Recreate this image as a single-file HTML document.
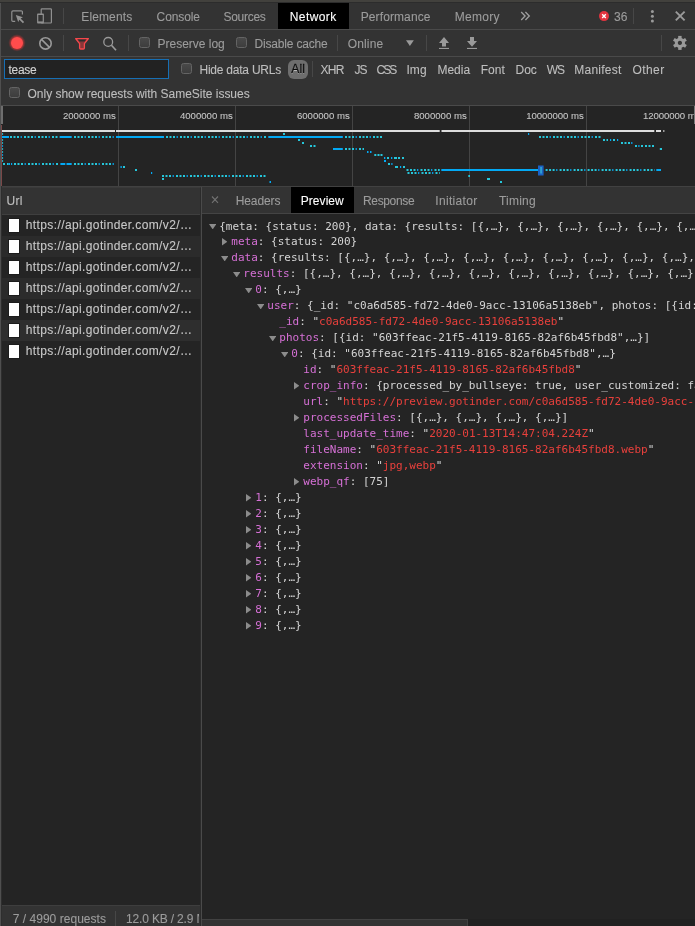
<!DOCTYPE html>
<html><head><meta charset="utf-8">
<title>DevTools</title>
<style>
html,body{margin:0;padding:0;}
body{width:695px;height:926px;overflow:hidden;background:#242424;position:relative;font-family:"Liberation Sans",sans-serif;font-size:12px;color:#a5a5a5;}
.a{position:absolute;}
.t{position:absolute;white-space:pre;line-height:14px;height:14px;-webkit-text-stroke:0.1px;}
.vd{position:absolute;width:1px;background:#474747;}
.cb{position:absolute;width:9px;height:9px;border:1px solid #646464;border-radius:2.5px;background:linear-gradient(#494949,#3d3d3d);}
.row{position:absolute;left:2px;width:198px;height:21px;}
.fi{position:absolute;left:9px;width:10px;height:13px;background:#fff;box-shadow:0 0 0 1px #1c1c1c;}
.tr{position:absolute;white-space:pre;font-family:"DejaVu Sans Mono","Liberation Mono",monospace;font-size:11px;line-height:13px;height:13px;color:#d5d5d5;}
.k{color:#d670d6;}
.s{color:#e8403c;}
.ar{position:absolute;width:0;height:0;}
.ad{border-left:3.7px solid transparent;border-right:3.7px solid transparent;border-top:5.4px solid #8c8c8c;}
.arr{border-top:3.7px solid transparent;border-bottom:3.7px solid transparent;border-left:5.2px solid #8c8c8c;}
</style></head><body><div id="root" style="position:absolute;left:0;top:0;width:695px;height:926px;will-change:transform">
<!-- backgrounds -->
<div class="a" style="left:0;top:0;width:695px;height:2px;background:#42413d"></div>
<div class="a" style="left:0;top:2px;width:695px;height:1px;background:#2c2c2c"></div>
<div class="a" style="left:0;top:3px;width:695px;height:26px;background:#333"></div>
<div class="a" style="left:0;top:29px;width:695px;height:1px;background:#4a4a4a"></div>
<div class="a" style="left:0;top:30px;width:695px;height:26px;background:#333"></div>
<div class="a" style="left:0;top:56px;width:695px;height:1px;background:#4a4a4a"></div>
<div class="a" style="left:0;top:57px;width:695px;height:48px;background:#333"></div>
<div class="a" style="left:0;top:105px;width:695px;height:1px;background:#4a4a4a"></div>
<!-- overview bottom / headers -->
<div class="a" style="left:0;top:186px;width:695px;height:1px;background:#414141"></div>
<div class="a" style="left:0;top:187px;width:695px;height:27px;background:#333"></div>
<div class="a" style="left:0;top:187px;width:200px;height:1px;background:#3a3a3a"></div>
<div class="a" style="left:0;top:214px;width:200px;height:1px;background:#3f3f3f"></div>
<div class="a" style="left:202px;top:213px;width:493px;height:1px;background:#444"></div>
<div class="a" style="left:202px;top:214px;width:493px;height:1px;background:#242424"></div>
<!-- panel divider -->
<div class="a" style="left:200px;top:188px;width:1px;height:738px;background:#2b2b2b"></div><div class="a" style="left:201px;top:187px;width:1px;height:739px;background:#4a4a4a"></div>
<!-- left strip -->
<div class="a" style="left:0;top:3px;width:1px;height:923px;background:#4f4f4f"></div>
<div class="a" style="left:1px;top:186px;width:1px;height:740px;background:#2e2e2e"></div>

<!-- selected tabs -->
<div class="a" style="left:278px;top:3px;width:71px;height:26px;background:#000"></div>
<div class="a" style="left:291px;top:187px;width:63px;height:26px;background:#000"></div>

<!-- row stripes -->
<div class="row" style="top:236px;background:#2b2b2b"></div>
<div class="row" style="top:278px;background:#2b2b2b"></div>
<div class="row" style="top:320px;background:#2e2e2e"></div>
<div class="fi" style="top:219px"></div>
<div class="fi" style="top:240px"></div>
<div class="fi" style="top:261px"></div>
<div class="fi" style="top:282px"></div>
<div class="fi" style="top:303px"></div>
<div class="fi" style="top:324px"></div>
<div class="fi" style="top:345px"></div>

<!-- status bar -->
<div class="a" style="left:2px;top:905px;width:198px;height:1px;background:#3e3e3e"></div>
<div class="a" style="left:2px;top:906px;width:198px;height:20px;background:#333"></div>
<div class="vd" style="left:115px;top:911px;height:15px"></div>
<!-- h scrollbar -->
<div class="a" style="left:202px;top:919px;width:493px;height:7px;background:#212121"></div>
<div class="a" style="left:202px;top:919px;width:265px;height:7px;background:#333;border-top:1px solid #414141;border-right:1px solid #414141;box-sizing:content-box"></div>

<!-- dividers -->
<div class="vd" style="left:63px;top:8px;height:16px"></div>
<div class="vd" style="left:633px;top:8px;height:16px"></div>
<div class="vd" style="left:63px;top:35px;height:16px"></div>
<div class="vd" style="left:128px;top:35px;height:16px"></div>
<div class="vd" style="left:337px;top:35px;height:16px"></div>
<div class="vd" style="left:426px;top:35px;height:16px"></div>
<div class="vd" style="left:661px;top:35px;height:16px"></div>
<div class="vd" style="left:312px;top:61px;height:16px"></div>

<!-- checkboxes -->
<div class="cb" style="left:139px;top:37px"></div>
<div class="cb" style="left:236px;top:37px"></div>
<div class="cb" style="left:181px;top:63px"></div>
<div class="cb" style="left:9px;top:87px"></div>

<!-- filter input -->
<div class="a" style="left:4px;top:59px;width:163px;height:18px;border:1px solid #176fb4;background:#222"></div>
<!-- All pill -->
<div class="a" style="left:288px;top:60px;width:20px;height:19px;border-radius:6px;background:#6e6e6e"></div>

<svg class="a" style="left:0;top:0" width="695" height="106" viewBox="0 0 695 106" fill="none">
<!-- inspect -->
<path d="M15.2 21.4 H13 a1.2 1.2 0 0 1 -1.2 -1.2 V12 a1.2 1.2 0 0 1 1.2 -1.2 h8.2 a1.2 1.2 0 0 1 1.2 1.2 V14.4" stroke="#909090" stroke-width="1.2"/>
<path d="M15.8 14.9 L22.9 17.3 L20.6 18.6 L24.1 22.1 L22.9 23.3 L19.4 19.8 L18.2 22.1 Z" fill="#939393"/>
<!-- device -->
<rect x="41.2" y="8.8" width="10.2" height="14.2" rx="0.8" stroke="#909090" stroke-width="1.2"/>
<rect x="37.1" y="13.4" width="6.8" height="10.1" rx="0.8" fill="#909090"/>
<rect x="38.3" y="15" width="4.4" height="6.4" fill="#333"/>
<!-- chevrons -->
<path d="M521.2 12 L525.1 16 L521.2 20 M525.4 12 L529.3 16 L525.4 20" stroke="#a0a0a0" stroke-width="1.3"/>
<!-- error -->
<circle cx="604" cy="16.1" r="5" fill="#e2343f"/>
<path d="M602.2 14.3 L605.8 17.9 M605.8 14.3 L602.2 17.9" stroke="#fff" stroke-width="1.4"/>
<!-- kebab -->
<circle cx="652.4" cy="11.4" r="1.5" fill="#9a9a9a"/><circle cx="652.4" cy="16.2" r="1.5" fill="#9a9a9a"/><circle cx="652.4" cy="21.1" r="1.5" fill="#9a9a9a"/>
<!-- close -->
<path d="M675.8 11.6 L684.6 20.4 M684.6 11.6 L675.8 20.4" stroke="#9a9a9a" stroke-width="1.9"/>
<!-- record -->
<circle cx="17" cy="42.9" r="8.4" fill="#ff3b3b" opacity="0.12"/>
<circle cx="17" cy="42.9" r="7.6" fill="#ff3b3b" opacity="0.2"/>
<circle cx="17" cy="42.9" r="6.8" fill="#ff3b3b" opacity="0.3"/>
<circle cx="17" cy="42.9" r="6" fill="#ff4c4c"/>
<!-- clear -->
<circle cx="45.5" cy="43.4" r="5.7" stroke="#9a9a9a" stroke-width="1.6"/>
<path d="M41.5 39.4 L49.5 47.4" stroke="#9a9a9a" stroke-width="1.6"/>
<!-- filter -->
<path d="M75.6 38.7 H88.4 L84.4 43.6 V48 a1 1 0 0 1 -1 1 h-2.8 a1 1 0 0 1 -1 -1 V43.6 Z" fill="#8a3638" stroke="#f5484c" stroke-width="1.3" stroke-linejoin="round"/>
<path d="M77.8 39.6 H86.2 L84.6 41.6 H79.4 Z" fill="#2c2c2c"/>
<!-- search -->
<circle cx="108.2" cy="41.9" r="4.4" stroke="#9a9a9a" stroke-width="1.3"/>
<path d="M111.5 45.2 L116 50.2" stroke="#9a9a9a" stroke-width="1.7"/>
<!-- dropdown -->
<polygon points="406,40.2 413.8,40.2 409.9,46" fill="#9a9a9a"/>
<!-- upload -->
<polygon points="444,37 449,43.1 446,43.1 446,46.6 442,46.6 442,43.1 439,43.1" fill="#9a9a9a"/>
<rect x="439" y="47.9" width="10" height="1.1" fill="#9a9a9a"/>
<!-- download -->
<polygon points="470,37 474,37 474,41 477,41 472,46.7 467,41 470,41" fill="#9a9a9a"/>
<rect x="467" y="47.9" width="10" height="1.1" fill="#9a9a9a"/>
<!-- gear -->
<g transform="translate(679.9 42.9)" fill="#9a9a9a">
<path fill-rule="evenodd" d="M0 -5.1 A5.1 5.1 0 1 0 0.001 -5.1 Z M0 -2.1 A2.1 2.1 0 1 1 -0.001 -2.1 Z"/>
<rect x="-1.7" y="-7" width="3.4" height="3"/>
<rect x="-1.7" y="-7" width="3.4" height="3" transform="rotate(60)"/>
<rect x="-1.7" y="-7" width="3.4" height="3" transform="rotate(120)"/>
<rect x="-1.7" y="-7" width="3.4" height="3" transform="rotate(180)"/>
<rect x="-1.7" y="-7" width="3.4" height="3" transform="rotate(240)"/>
<rect x="-1.7" y="-7" width="3.4" height="3" transform="rotate(300)"/>
</g>
</svg>
<svg class="a" style="left:208px;top:192px" width="14" height="14" viewBox="0 0 14 14" fill="none">
<path d="M4 4.5 L10 10.8 M10 4.5 L4 10.8" stroke="#727272" stroke-width="1.1"/>
</svg>

<svg class="a" style="left:0;top:106px" width="695" height="80" viewBox="0 0 695 80">
<rect x="118" y="0" width="1" height="80" fill="#444"/>
<rect x="235" y="0" width="1" height="80" fill="#444"/>
<rect x="352" y="0" width="1" height="80" fill="#444"/>
<rect x="469" y="0" width="1" height="80" fill="#444"/>
<rect x="586" y="0" width="1" height="80" fill="#444"/>
<rect x="1" y="0" width="2" height="18" fill="#6e6e6e"/>
<rect x="694" y="0" width="1" height="18" fill="#7a7a7a"/>
<rect x="1" y="19" width="1" height="61" fill="#7a4848"/>
<rect x="2" y="24" width="113" height="2" fill="#dddddd"/>
<rect x="116" y="24" width="323.7" height="2" fill="#dddddd"/>
<rect x="441.5" y="24" width="212.8" height="2" fill="#dddddd"/>
<rect x="656" y="24" width="5" height="2" fill="#dddddd"/>
<rect x="663" y="24" width="1.5" height="2" fill="#9a9a9a"/>
<rect x="2" y="27" width="1.1" height="2" fill="#26c6da" opacity="0.8"/>
<rect x="2" y="30" width="1.1" height="2" fill="#03a9f4" opacity="0.8"/>
<rect x="2" y="33" width="1.1" height="2" fill="#26c6da" opacity="0.8"/>
<rect x="2" y="36" width="1.1" height="2" fill="#26c6da" opacity="0.8"/>
<rect x="2" y="39" width="1.1" height="2" fill="#03a9f4" opacity="0.8"/>
<rect x="2" y="42" width="1.1" height="2" fill="#26c6da" opacity="0.8"/>
<rect x="2" y="45" width="1.1" height="2" fill="#26c6da" opacity="0.8"/>
<rect x="2" y="48" width="1.1" height="2" fill="#03a9f4" opacity="0.8"/>
<rect x="2" y="51" width="1.1" height="2" fill="#26c6da" opacity="0.8"/>
<rect x="2" y="54" width="1.1" height="2" fill="#26c6da" opacity="0.8"/>
<rect x="2" y="30" width="7" height="2" fill="#03a9f4"/>
<path d="M10 31H58" stroke="#26c6da" stroke-width="2" stroke-dasharray="2 1.5 2 1.5 2 5"/>
<path d="M20.6 31H58" stroke="#03a9f4" stroke-width="2" stroke-dasharray="1.2 12.8"/>
<rect x="59.6" y="30" width="12.1" height="2" fill="#03a9f4"/>
<path d="M74 31H114.5" stroke="#26c6da" stroke-width="2" stroke-dasharray="2 1.5 2 1.5 2 5"/>
<path d="M84.6 31H114.5" stroke="#03a9f4" stroke-width="2" stroke-dasharray="1.2 12.8"/>
<rect x="116" y="30" width="48" height="2" fill="#03a9f4"/>
<path d="M166 31H267" stroke="#26c6da" stroke-width="2" stroke-dasharray="2 1.5 2 1.5 2 5"/>
<path d="M176.6 31H267" stroke="#03a9f4" stroke-width="2" stroke-dasharray="1.2 12.8"/>
<rect x="268.3" y="30" width="74.5" height="2" fill="#03a9f4"/>
<path d="M345 31H382" stroke="#26c6da" stroke-width="2" stroke-dasharray="2 1.5 2 1.5 2 5"/>
<path d="M355.6 31H382" stroke="#03a9f4" stroke-width="2" stroke-dasharray="1.2 12.8"/>
<path d="M539 31H601" stroke="#26c6da" stroke-width="2" stroke-dasharray="2 1.5 2 1.5 2 5"/>
<path d="M549.6 31H601" stroke="#03a9f4" stroke-width="2" stroke-dasharray="1.2 12.8"/>
<rect x="283" y="27" width="2" height="2" fill="#26c6da"/>
<rect x="528" y="27" width="1.2" height="2" fill="#03a9f4"/>
<rect x="298" y="33" width="2" height="2" fill="#26c6da"/>
<rect x="603" y="33" width="2" height="2" fill="#26c6da"/>
<rect x="606.5" y="33" width="1.5" height="2" fill="#26c6da"/>
<rect x="613" y="33" width="2" height="2" fill="#26c6da"/>
<rect x="610" y="33" width="1.2" height="2" fill="#03a9f4"/>
<rect x="617" y="33" width="1.2" height="2" fill="#03a9f4"/>
<rect x="302" y="36" width="2" height="2" fill="#26c6da"/>
<rect x="621" y="36" width="2" height="2" fill="#26c6da"/>
<rect x="624.5" y="36" width="2.0" height="2" fill="#26c6da"/>
<rect x="628" y="36" width="2" height="2" fill="#26c6da"/>
<rect x="631.2" y="36" width="1.2" height="2" fill="#03a9f4"/>
<rect x="310" y="39" width="2" height="2" fill="#26c6da"/>
<rect x="313.5" y="39" width="2.0" height="2" fill="#26c6da"/>
<rect x="635" y="39" width="2" height="2" fill="#26c6da"/>
<rect x="641" y="39" width="2" height="2" fill="#26c6da"/>
<rect x="645" y="39" width="2" height="2" fill="#26c6da"/>
<rect x="648.5" y="39" width="2.0" height="2" fill="#26c6da"/>
<rect x="652" y="39" width="2" height="2" fill="#26c6da"/>
<rect x="638.3" y="39" width="1.2" height="2" fill="#03a9f4"/>
<rect x="333" y="42" width="9.8" height="2" fill="#03a9f4"/>
<path d="M345 43H364" stroke="#26c6da" stroke-width="2" stroke-dasharray="2 1.5 2 1.5 2 5"/>
<path d="M355.6 43H364" stroke="#03a9f4" stroke-width="2" stroke-dasharray="1.2 12.8"/>
<rect x="659.8" y="42" width="2.2" height="2" fill="#26c6da"/>
<rect x="367" y="45" width="1.5" height="2" fill="#03a9f4"/>
<rect x="370" y="45" width="1.5" height="2" fill="#03a9f4"/>
<rect x="374.3" y="48" width="2.0" height="2" fill="#26c6da"/>
<rect x="377.5" y="48" width="2.0" height="2" fill="#26c6da"/>
<rect x="380.5" y="48" width="2.0" height="2" fill="#26c6da"/>
<rect x="387" y="51" width="2" height="2" fill="#26c6da"/>
<rect x="394" y="51" width="3" height="2" fill="#26c6da"/>
<rect x="398" y="51" width="2" height="2" fill="#26c6da"/>
<rect x="402" y="51" width="2" height="2" fill="#26c6da"/>
<rect x="384" y="51" width="1.3" height="2" fill="#03a9f4"/>
<rect x="391" y="51" width="1.3" height="2" fill="#03a9f4"/>
<rect x="384" y="54" width="2" height="2" fill="#03a9f4"/>
<rect x="3" y="57" width="2" height="2" fill="#26c6da"/>
<rect x="7" y="57" width="1.5" height="2" fill="#26c6da"/>
<rect x="8.5" y="57" width="1.5" height="2" fill="#03a9f4"/>
<rect x="11" y="57" width="1.2" height="2" fill="#03a9f4"/>
<path d="M14 58H58" stroke="#26c6da" stroke-width="2" stroke-dasharray="2 1.5 2 1.5 2 5"/>
<path d="M24.6 58H58" stroke="#03a9f4" stroke-width="2" stroke-dasharray="1.2 12.8"/>
<rect x="60.4" y="57" width="4.9" height="2" fill="#03a9f4"/>
<rect x="66.5" y="57" width="5.2" height="2" fill="#03a9f4"/>
<path d="M74 58H114" stroke="#26c6da" stroke-width="2" stroke-dasharray="2 1.5 2 1.5 2 5"/>
<path d="M84.6 58H114" stroke="#03a9f4" stroke-width="2" stroke-dasharray="1.2 12.8"/>
<rect x="388" y="57" width="2" height="2" fill="#26c6da"/>
<rect x="391.3" y="57" width="1.2" height="2" fill="#03a9f4"/>
<rect x="120.5" y="60" width="1.3" height="2" fill="#03a9f4"/>
<rect x="123" y="60" width="2" height="2" fill="#26c6da"/>
<rect x="395" y="60" width="3" height="2" fill="#26c6da"/>
<rect x="403" y="60" width="2" height="2" fill="#26c6da"/>
<rect x="400" y="60" width="1.2" height="2" fill="#03a9f4"/>
<rect x="135" y="63" width="2" height="2" fill="#26c6da"/>
<path d="M406.5 64H439.7" stroke="#26c6da" stroke-width="2" stroke-dasharray="2 1.5 2 1.5 2 5"/>
<path d="M417.1 64H439.7" stroke="#03a9f4" stroke-width="2" stroke-dasharray="1.2 12.8"/>
<rect x="441.3" y="63" width="97.3" height="2" fill="#03a9f4"/>
<path d="M545.6 64H654.7" stroke="#26c6da" stroke-width="2" stroke-dasharray="2 1.5 2 1.5 2 5"/>
<path d="M556.2 64H654.7" stroke="#03a9f4" stroke-width="2" stroke-dasharray="1.2 12.8"/>
<rect x="656.3" y="63" width="4.7" height="2" fill="#03a9f4"/>
<rect x="151" y="66" width="1.2" height="2" fill="#03a9f4"/>
<path d="M407.5 67H439.7" stroke="#26c6da" stroke-width="2" stroke-dasharray="2 1.5 2 1.5 2 5"/>
<path d="M418.1 67H439.7" stroke="#03a9f4" stroke-width="2" stroke-dasharray="1.2 12.8"/>
<path d="M162 70H267" stroke="#26c6da" stroke-width="2" stroke-dasharray="2 1.5 2 1.5 2 5"/>
<path d="M172.6 70H267" stroke="#03a9f4" stroke-width="2" stroke-dasharray="1.2 12.8"/>
<rect x="468.3" y="69" width="1.7" height="2" fill="#26c6da"/>
<rect x="162" y="72" width="2" height="2" fill="#26c6da"/>
<rect x="487" y="72" width="3" height="2" fill="#26c6da"/>
<rect x="269.5" y="75" width="1.5" height="2" fill="#03a9f4"/>
<rect x="500" y="75" width="2" height="2" fill="#26c6da"/>
<rect x="538" y="59.5" width="5.6" height="10.0" fill="#1a62c6"/>
<rect x="540.5" y="61" width="1.1" height="6.5" fill="#3fc7d6"/>
</svg>
<div class="t" style="left:81.3px;top:10.05px;color:#9c9c9c;letter-spacing:0.117px;">Elements</div>
<div class="t" style="left:156.6px;top:10.05px;color:#9c9c9c;letter-spacing:-0.116px;">Console</div>
<div class="t" style="left:223.5px;top:10.05px;color:#9c9c9c;letter-spacing:-0.279px;">Sources</div>
<div class="t" style="left:289.75px;top:10.05px;color:#ffffff;letter-spacing:0.406px;">Network</div>
<div class="t" style="left:360.75px;top:10.05px;color:#9c9c9c;letter-spacing:0.098px;">Performance</div>
<div class="t" style="left:454.75px;top:10.05px;color:#9c9c9c;letter-spacing:0.281px;">Memory</div>
<div class="t" style="left:613.9px;top:9.5px;color:#9c9c9c;letter-spacing:0.094px;">36</div>
<div class="t" style="left:157.5px;top:36.8px;color:#9c9c9c;letter-spacing:-0.01px;">Preserve log</div>
<div class="t" style="left:254.5px;top:36.8px;color:#9c9c9c;letter-spacing:-0.177px;">Disable cache</div>
<div class="t" style="left:347.7px;top:36.8px;color:#9c9c9c;letter-spacing:0.169px;">Online</div>
<div class="t" style="left:8.4px;top:63.2px;color:#d4d4d4;letter-spacing:-0.246px;">tease</div>
<div class="t" style="left:199.5px;top:62.8px;color:#bebebe;letter-spacing:-0.231px;">Hide data URLs</div>
<div class="t" style="left:291.2px;top:62.0px;color:#0c0c0c;letter-spacing:0.25px;text-shadow:0 1px 0 rgba(255,255,255,0.5);-webkit-text-stroke:0.3px;">All</div>
<div class="t" style="left:320.5px;top:62.8px;color:#bebebe;letter-spacing:-0.698px;">XHR</div>
<div class="t" style="left:354.5px;top:62.8px;color:#bebebe;letter-spacing:-0.906px;">JS</div>
<div class="t" style="left:376.5px;top:62.8px;color:#bebebe;letter-spacing:-1.97px;">CSS</div>
<div class="t" style="left:406.4px;top:62.8px;color:#bebebe;letter-spacing:0.109px;">Img</div>
<div class="t" style="left:437.5px;top:62.8px;color:#bebebe;letter-spacing:-0.026px;">Media</div>
<div class="t" style="left:480.7px;top:62.8px;color:#bebebe;letter-spacing:0.044px;">Font</div>
<div class="t" style="left:515.6px;top:62.8px;color:#bebebe;letter-spacing:-0.089px;">Doc</div>
<div class="t" style="left:546.7px;top:62.8px;color:#bebebe;letter-spacing:-0.977px;">WS</div>
<div class="t" style="left:574.2px;top:62.8px;color:#bebebe;letter-spacing:0.266px;">Manifest</div>
<div class="t" style="left:632.5px;top:62.8px;color:#bebebe;letter-spacing:0.409px;">Other</div>
<div class="t" style="left:27.5px;top:86.8px;color:#bebebe;letter-spacing:-0.015px;">Only show requests with SameSite issues</div>
<div class="t" style="left:6.6px;top:193.8px;color:#c0c0c0;letter-spacing:0.188px;">Url</div>
<div class="t" style="left:235.75px;top:193.8px;color:#9c9c9c;letter-spacing:-0.114px;">Headers</div>
<div class="t" style="left:300.75px;top:193.8px;color:#ffffff;letter-spacing:0.051px;">Preview</div>
<div class="t" style="left:363.0px;top:193.8px;color:#9c9c9c;letter-spacing:-0.354px;">Response</div>
<div class="t" style="left:435.3px;top:193.8px;color:#9c9c9c;letter-spacing:0.316px;">Initiator</div>
<div class="t" style="left:499px;top:193.8px;color:#9c9c9c;letter-spacing:0.221px;">Timing</div>
<div class="t" style="left:25.8px;top:218.05px;color:#c8c8c8;letter-spacing:0.384px;">https://api.gotinder.com/v2/…</div>
<div class="t" style="left:25.8px;top:239.05px;color:#c8c8c8;letter-spacing:0.384px;">https://api.gotinder.com/v2/…</div>
<div class="t" style="left:25.8px;top:260.05px;color:#c8c8c8;letter-spacing:0.384px;">https://api.gotinder.com/v2/…</div>
<div class="t" style="left:25.8px;top:281.05px;color:#c8c8c8;letter-spacing:0.384px;">https://api.gotinder.com/v2/…</div>
<div class="t" style="left:25.8px;top:302.05px;color:#c8c8c8;letter-spacing:0.384px;">https://api.gotinder.com/v2/…</div>
<div class="t" style="left:25.8px;top:323.05px;color:#c8c8c8;letter-spacing:0.384px;">https://api.gotinder.com/v2/…</div>
<div class="t" style="left:25.8px;top:344.05px;color:#c8c8c8;letter-spacing:0.384px;">https://api.gotinder.com/v2/…</div>
<div class="t" style="left:12.7px;top:912.4px;color:#9c9c9c;letter-spacing:0.033px;">7 / 4990 requests</div>
<div class="t" style="left:126px;top:912.4px;color:#9c9c9c;letter-spacing:-0.161px;width:73px;overflow:hidden;">12.0 KB / 2.9 MB</div>
<div class="t" style="left:62.9px;top:109px;color:#c4c4c4;font-size:9.6px;-webkit-text-stroke:0.1px;letter-spacing:0.019px;">2000000 ms</div>
<div class="t" style="left:179.9px;top:109px;color:#c4c4c4;font-size:9.6px;-webkit-text-stroke:0.1px;letter-spacing:0.009px;">4000000 ms</div>
<div class="t" style="left:296.9px;top:109px;color:#c4c4c4;font-size:9.6px;-webkit-text-stroke:0.1px;letter-spacing:0.009px;">6000000 ms</div>
<div class="t" style="left:413.9px;top:109px;color:#c4c4c4;font-size:9.6px;-webkit-text-stroke:0.1px;letter-spacing:0.009px;">8000000 ms</div>
<div class="t" style="left:526.3px;top:109px;color:#c4c4c4;font-size:9.6px;-webkit-text-stroke:0.1px;letter-spacing:-0.076px;">10000000 ms</div>
<div class="t" style="left:643.0px;top:109px;color:#c4c4c4;font-size:9.6px;-webkit-text-stroke:0.1px;letter-spacing:-0.076px;width:50.6px;overflow:hidden;">12000000 ms</div>
<div class="a" style="left:202px;top:215px;width:493px;height:704px;overflow:hidden"><div class="a" style="left:-202px;top:-215px">
<div class="tr" style="left:219.2px;top:220px">{meta: {status: 200}, data: {results: [{,…}, {,…}, {,…}, {,…}, {,…}, {,…}, {,…}, {,…}, {,…}, {,…}]}}</div>
<svg class="a" style="left:208.75px;top:223.9px" width="7.4" height="5.4"><polygon points="0,0 7.4,0 3.7,5.4" fill="#8c8c8c"/></svg>
<div class="tr" style="left:231.3px;top:235px"><span class="k">meta</span>: {status: 200}</div>
<svg class="a" style="left:221.8px;top:238.1px" width="5.5" height="7.5"><polygon points="0,0 5.5,3.75 0,7.5" fill="#8c8c8c"/></svg>
<div class="tr" style="left:231.3px;top:251px"><span class="k">data</span>: {results: [{,…}, {,…}, {,…}, {,…}, {,…}, {,…}, {,…}, {,…}, {,…}, {,…}]}</div>
<svg class="a" style="left:220.8px;top:255.6px" width="7.4" height="5.4"><polygon points="0,0 7.4,0 3.7,5.4" fill="#8c8c8c"/></svg>
<div class="tr" style="left:243.3px;top:267px"><span class="k">results</span>: [{,…}, {,…}, {,…}, {,…}, {,…}, {,…}, {,…}, {,…}, {,…}, {,…}]</div>
<svg class="a" style="left:232.8px;top:271.6px" width="7.4" height="5.4"><polygon points="0,0 7.4,0 3.7,5.4" fill="#8c8c8c"/></svg>
<div class="tr" style="left:255.3px;top:283px"><span class="k">0</span>: {,…}</div>
<svg class="a" style="left:244.8px;top:287.6px" width="7.4" height="5.4"><polygon points="0,0 7.4,0 3.7,5.4" fill="#8c8c8c"/></svg>
<div class="tr" style="left:267.3px;top:299px"><span class="k">user</span>: {_id: "c0a6d585-fd72-4de0-9acc-13106a5138eb", photos: [{id: "603ffeac-21f5-4119-8165-82af6b45fbd8",…}]}</div>
<svg class="a" style="left:256.8px;top:303.6px" width="7.4" height="5.4"><polygon points="0,0 7.4,0 3.7,5.4" fill="#8c8c8c"/></svg>
<div class="tr" style="left:279.3px;top:315px"><span class="k">_id</span>: "<span class="s">c0a6d585-fd72-4de0-9acc-13106a5138eb</span>"</div>
<div class="tr" style="left:279.3px;top:331px"><span class="k">photos</span>: [{id: "603ffeac-21f5-4119-8165-82af6b45fbd8",…}]</div>
<svg class="a" style="left:268.8px;top:335.6px" width="7.4" height="5.4"><polygon points="0,0 7.4,0 3.7,5.4" fill="#8c8c8c"/></svg>
<div class="tr" style="left:291.3px;top:347px"><span class="k">0</span>: {id: "603ffeac-21f5-4119-8165-82af6b45fbd8",…}</div>
<svg class="a" style="left:280.8px;top:351.6px" width="7.4" height="5.4"><polygon points="0,0 7.4,0 3.7,5.4" fill="#8c8c8c"/></svg>
<div class="tr" style="left:303.3px;top:363px"><span class="k">id</span>: "<span class="s">603ffeac-21f5-4119-8165-82af6b45fbd8</span>"</div>
<div class="tr" style="left:303.3px;top:379px"><span class="k">crop_info</span>: {processed_by_bullseye: true, user_customized: false, user: {}, algo: {}}</div>
<svg class="a" style="left:293.8px;top:382.1px" width="5.5" height="7.5"><polygon points="0,0 5.5,3.75 0,7.5" fill="#8c8c8c"/></svg>
<div class="tr" style="left:303.3px;top:395px"><span class="k">url</span>: "<span class="s">https://preview.gotinder.com/c0a6d585-fd72-4de0-9acc-13106a5138eb/603ffeac-21f5-4119-8165-82af6b45fbd8.webp</span>"</div>
<div class="tr" style="left:303.3px;top:411px"><span class="k">processedFiles</span>: [{,…}, {,…}, {,…}, {,…}]</div>
<svg class="a" style="left:293.8px;top:414.1px" width="5.5" height="7.5"><polygon points="0,0 5.5,3.75 0,7.5" fill="#8c8c8c"/></svg>
<div class="tr" style="left:303.3px;top:427px"><span class="k">last_update_time</span>: "<span class="s">2020-01-13T14:47:04.224Z</span>"</div>
<div class="tr" style="left:303.3px;top:443px"><span class="k">fileName</span>: "<span class="s">603ffeac-21f5-4119-8165-82af6b45fbd8.webp</span>"</div>
<div class="tr" style="left:303.3px;top:459px"><span class="k">extension</span>: "<span class="s">jpg,webp</span>"</div>
<div class="tr" style="left:303.3px;top:475px"><span class="k">webp_qf</span>: [75]</div>
<svg class="a" style="left:293.8px;top:478.1px" width="5.5" height="7.5"><polygon points="0,0 5.5,3.75 0,7.5" fill="#8c8c8c"/></svg>
<div class="tr" style="left:255.3px;top:491px"><span class="k">1</span>: {,…}</div>
<svg class="a" style="left:245.8px;top:494.1px" width="5.5" height="7.5"><polygon points="0,0 5.5,3.75 0,7.5" fill="#8c8c8c"/></svg>
<div class="tr" style="left:255.3px;top:507px"><span class="k">2</span>: {,…}</div>
<svg class="a" style="left:245.8px;top:510.1px" width="5.5" height="7.5"><polygon points="0,0 5.5,3.75 0,7.5" fill="#8c8c8c"/></svg>
<div class="tr" style="left:255.3px;top:523px"><span class="k">3</span>: {,…}</div>
<svg class="a" style="left:245.8px;top:526.1px" width="5.5" height="7.5"><polygon points="0,0 5.5,3.75 0,7.5" fill="#8c8c8c"/></svg>
<div class="tr" style="left:255.3px;top:539px"><span class="k">4</span>: {,…}</div>
<svg class="a" style="left:245.8px;top:542.1px" width="5.5" height="7.5"><polygon points="0,0 5.5,3.75 0,7.5" fill="#8c8c8c"/></svg>
<div class="tr" style="left:255.3px;top:555px"><span class="k">5</span>: {,…}</div>
<svg class="a" style="left:245.8px;top:558.1px" width="5.5" height="7.5"><polygon points="0,0 5.5,3.75 0,7.5" fill="#8c8c8c"/></svg>
<div class="tr" style="left:255.3px;top:571px"><span class="k">6</span>: {,…}</div>
<svg class="a" style="left:245.8px;top:574.1px" width="5.5" height="7.5"><polygon points="0,0 5.5,3.75 0,7.5" fill="#8c8c8c"/></svg>
<div class="tr" style="left:255.3px;top:587px"><span class="k">7</span>: {,…}</div>
<svg class="a" style="left:245.8px;top:590.1px" width="5.5" height="7.5"><polygon points="0,0 5.5,3.75 0,7.5" fill="#8c8c8c"/></svg>
<div class="tr" style="left:255.3px;top:603px"><span class="k">8</span>: {,…}</div>
<svg class="a" style="left:245.8px;top:606.1px" width="5.5" height="7.5"><polygon points="0,0 5.5,3.75 0,7.5" fill="#8c8c8c"/></svg>
<div class="tr" style="left:255.3px;top:619px"><span class="k">9</span>: {,…}</div>
<svg class="a" style="left:245.8px;top:622.1px" width="5.5" height="7.5"><polygon points="0,0 5.5,3.75 0,7.5" fill="#8c8c8c"/></svg>
</div></div>
</div></body></html>
